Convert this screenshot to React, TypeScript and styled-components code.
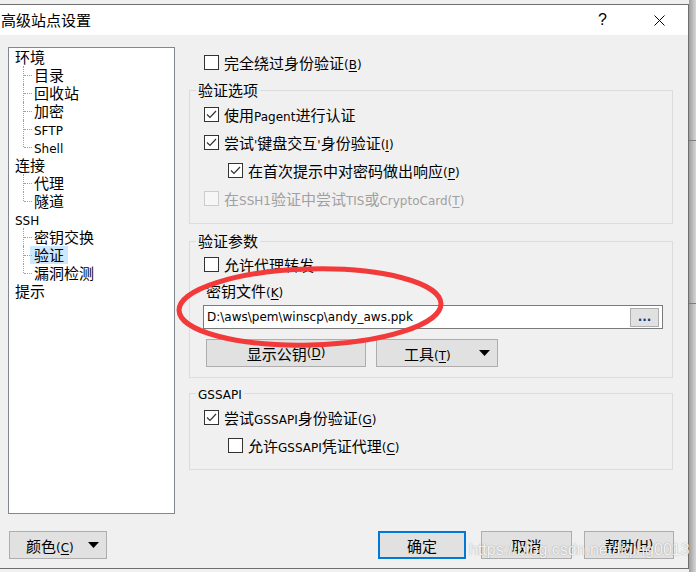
import React from "react";
import styled, { createGlobalStyle, css } from "styled-components";

const Global = createGlobalStyle`
  html, body { margin: 0; padding: 0; }
  body {
    width: 696px; height: 572px; overflow: hidden;
    background: #f2f2f2;
    font-family: "Noto Sans CJK SC", "Microsoft YaHei", sans-serif;
    font-size: 15px; color: #000;
  }
`;

const Screen = styled.div`
  position: relative;
  width: 696px;
  height: 572px;
  box-sizing: border-box;
  padding-top: 4px;
  display: flex;
  align-items: flex-start;
  background: #f0f0f0;
`;

const EdgeStrip = styled.div`
  flex: 1;
  align-self: stretch;
  margin-top: -4px;
  background:
    linear-gradient(to bottom, transparent 0, transparent 140px, #7d7d7d 140px, #7d7d7d 141px, transparent 141px,
      transparent 303px, #7d7d7d 303px, #7d7d7d 304px, transparent 304px),
    linear-gradient(to right, #9e9e9e, #d6d6d6);
`;

const Window = styled.div`
  width: 689px;
  height: 565px;
  box-sizing: border-box;
  border: 1px solid #6f6f6f;
  border-left: none;
  background: #f0f0f0;
  display: flex;
  flex-direction: column;
`;

const TitleBar = styled.div`
  height: 30px;
  flex: none;
  background: #fff;
  display: flex;
  align-items: center;
`;

const Title = styled.div`
  flex: 1;
  padding-left: 1px;
  font-size: 15px;
  line-height: 30px;
`;

const Caption = styled.div`
  width: 57px;
  height: 30px;
  display: flex;
  align-items: center;
  justify-content: center;
  font-size: 16px;
  font-family: "Liberation Sans", "Noto Sans CJK SC", sans-serif;
`;

const Body = styled.div`
  flex: 1;
  display: flex;
  flex-direction: column;
  padding: 12px 14px 8px 8px;
`;

const Main = styled.div`
  display: flex;
  gap: 14px;
  height: 467px;
`;

const Tree = styled.div`
  width: 167px;
  flex: none;
  box-sizing: border-box;
  background: #fff;
  border: 1px solid #828790;
`;

const TreeRow = styled.div<{ $child?: boolean; $last?: boolean }>`
  position: relative;
  height: 18px;
  line-height: 18px;
  padding-left: ${(p) => (p.$child ? 21 : 2)}px;
  white-space: nowrap;
  ${(p) =>
    p.$child &&
    css`
      &::before {
        content: "";
        position: absolute;
        left: 14px;
        top: 0;
        height: ${p.$last ? 9 : 18}px;
        border-left: 1px dotted #a0a0a0;
      }
      &::after {
        content: "";
        position: absolute;
        left: 15px;
        top: 9px;
        width: 8px;
        border-top: 1px dotted #a0a0a0;
      }
    `}
`;

const TreeLabel = styled.span<{ $selected?: boolean }>`
  display: inline-block;
  padding: 0 4px;
  height: 18px;
  background: ${(p) => (p.$selected ? "#cce8ff" : "transparent")};
`;

const Panel = styled.div`
  width: 484px;
  flex: none;
  display: flex;
  flex-direction: column;
  padding-top: 1px;
`;

const CheckRow = styled.label<{ $indent?: number; $disabled?: boolean }>`
  height: 28px;
  display: flex;
  align-items: center;
  gap: 5px;
  padding-left: ${(p) => p.$indent ?? 0}px;
  color: ${(p) => (p.$disabled ? "#a0a0a0" : "#000")};
  white-space: nowrap;
`;

const Box = styled.span<{ $disabled?: boolean }>`
  width: 15px;
  height: 15px;
  box-sizing: border-box;
  flex: none;
  border: 1px solid ${(p) => (p.$disabled ? "#cccccc" : "#333")};
  background: ${(p) => (p.$disabled ? "#f6f6f6" : "#fff")};
  display: flex;
  align-items: center;
  justify-content: center;
`;

const Group = styled.fieldset<{ $mt: number }>`
  margin: ${(p) => p.$mt}px 0 0 0;
  padding: 0;
  border: 1px solid #dcdcdc;
  min-width: 0;
`;

const GroupTitle = styled.legend`
  margin-left: 6px;
  padding: 0 2px;
  height: 18px;
  line-height: 18px;
  font-size: 15px;
`;

const GroupBody = styled.div<{ $pt: number; $pb: number }>`
  display: flex;
  flex-direction: column;
  padding: ${(p) => p.$pt}px 0 ${(p) => p.$pb}px 14px;
`;

const FieldLabel = styled.div`
  margin-top: 4px;
  height: 18px;
  line-height: 18px;
  padding-left: 2px;
`;

const PathInput = styled.div`
  margin-top: 5px;
  margin-left: -1px;
  width: 460px;
  height: 24px;
  box-sizing: border-box;
  border: 1px solid #7a7a7a;
  background: #fff;
  display: flex;
  align-items: center;
  padding: 0 3px 0 3px;
`;

const PathText = styled.span`
  flex: 1;
  white-space: nowrap;
  overflow: hidden;
  font-family: "DejaVu Sans", sans-serif;
  font-size: 12px;
`;

const Browse = styled.span`
  width: 29px;
  height: 19px;
  box-sizing: border-box;
  background: #e1e1e1;
  border: 1px solid #adadad;
  display: flex;
  align-items: flex-end;
  justify-content: center;
  font-family: "DejaVu Sans", sans-serif;
  font-size: 12px;
  font-weight: bold;
  line-height: 1;
  padding-bottom: 3px;
  color: #1a3a7a;
`;

const ButtonRow = styled.div`
  margin-top: 10px;
  display: flex;
  gap: 10px;
  padding-left: 2px;
`;

const Button = styled.div<{ $w: number; $default?: boolean; $split?: boolean; $pl?: number }>`
  width: ${(p) => p.$w}px;
  height: 28px;
  box-sizing: border-box;
  background: #e1e1e1;
  border: ${(p) => (p.$default ? "2px solid #0078d7" : "1px solid #adadad")};
  display: flex;
  align-items: center;
  justify-content: ${(p) => (p.$split ? "flex-start" : "center")};
  padding-left: ${(p) => (p.$split ? p.$pl ?? 0 : 0)}px;
  padding-right: ${(p) => (p.$split ? 7 : 0)}px;
  white-space: nowrap;
  flex: none;
`;

const Arrow = styled.svg`
  margin-left: auto;
  flex: none;
`;

const Footer = styled.div`
  margin-top: 17px;
  height: 28px;
  display: flex;
  padding-left: 1px;
`;

const FooterRight = styled.div`
  margin-left: auto;
  display: flex;
`;

const Spacer = styled.span<{ $w: number }>`
  width: ${(p) => p.$w}px;
  flex: none;
`;

const Lat = styled.span`
  font-family: "DejaVu Sans", sans-serif;
  font-size: 12px;
  line-height: 1;
`;

const Mn = styled.span`
  text-decoration: underline;
  text-underline-offset: 2px;
`;

const Watermark = styled.div`
  position: absolute;
  left: 469px;
  top: 541px;
  font-family: "Liberation Sans", sans-serif;
  font-size: 16px;
  color: rgba(255, 255, 255, 0.9);
  text-shadow: 0 0 1px rgba(0, 0, 0, 0.3), 0 0 2px rgba(0, 0, 0, 0.12);
  white-space: nowrap;
  pointer-events: none;
`;

const Overlay = styled.svg`
  position: absolute;
  left: 0;
  top: 0;
  pointer-events: none;
`;

function withMn(p: string): React.ReactNode {
  const idx = p.indexOf("&");
  if (idx < 0) return p;
  return (
    <>
      {p.slice(0, idx)}
      <Mn>{p[idx + 1]}</Mn>
      {p.slice(idx + 2)}
    </>
  );
}

const T: React.FC<{ s: string }> = ({ s }) => {
  const parts = s.match(/[\x00-\x7F]+|[^\x00-\x7F]+/g) || [];
  return (
    <>
      {parts.map((p, i) =>
        /^[\x00-\x7F]/.test(p) ? <Lat key={i}>{withMn(p)}</Lat> : <React.Fragment key={i}>{p}</React.Fragment>
      )}
    </>
  );
};

const CheckMark = () => (
  <svg width="11" height="9" viewBox="0 0 11 9">
    <path d="M1 4.5 L4 7.5 L10 1" fill="none" stroke="#333" strokeWidth="1.2" />
  </svg>
);

const Check: React.FC<{ checked?: boolean; disabled?: boolean; indent?: number; s: string }> = ({
  checked,
  disabled,
  indent,
  s,
}) => (
  <CheckRow $indent={indent} $disabled={disabled}>
    <Box $disabled={disabled}>{checked && <CheckMark />}</Box>
    <span>
      <T s={s} />
    </span>
  </CheckRow>
);

const DownArrow = () => (
  <Arrow width="11" height="6" viewBox="0 0 11 6">
    <path d="M0 0 H11 L5.5 6 Z" fill="#000" />
  </Arrow>
);

const tree: { label: string; children: string[] }[] = [
  { label: "环境", children: ["目录", "回收站", "加密", "SFTP", "Shell"] },
  { label: "连接", children: ["代理", "隧道"] },
  { label: "SSH", children: ["密钥交换", "验证", "漏洞检测"] },
  { label: "提示", children: [] },
];

export default function App() {
  return (
    <>
      <Global />
      <Screen>
        <Window>
          <TitleBar>
            <Title>高级站点设置</Title>
            <Caption>?</Caption>
            <Caption>
              <svg width="11" height="11" viewBox="0 0 11 11">
                <path d="M0.5 0.5 L10.5 10.5 M10.5 0.5 L0.5 10.5" stroke="#000" strokeWidth="1" />
              </svg>
            </Caption>
          </TitleBar>
          <Body>
            <Main>
              <Tree>
                {tree.map((n) => (
                  <React.Fragment key={n.label}>
                    <TreeRow>
                      <TreeLabel>
                        <T s={n.label} />
                      </TreeLabel>
                    </TreeRow>
                    {n.children.map((c, i) => (
                      <TreeRow key={c} $child $last={i === n.children.length - 1}>
                        <TreeLabel $selected={c === "验证"}>
                          <T s={c} />
                        </TreeLabel>
                      </TreeRow>
                    ))}
                  </React.Fragment>
                ))}
              </Tree>
              <Panel>
                <Check indent={15} s="完全绕过身份验证(&B)" />
                <Group $mt={5}>
                  <GroupTitle>验证选项</GroupTitle>
                  <GroupBody $pt={1} $pb={11}>
                    <Check checked s="使用Pagent进行认证" />
                    <Check checked s="尝试'键盘交互'身份验证(&I)" />
                    <Check checked indent={24} s="在首次提示中对密码做出响应(&P)" />
                    <Check disabled s="在SSH1验证中尝试TIS或CryptoCard(&T)" />
                  </GroupBody>
                </Group>
                <Group $mt={8}>
                  <GroupTitle>验证参数</GroupTitle>
                  <GroupBody $pt={0} $pb={10}>
                    <Check s="允许代理转发" />
                    <FieldLabel>
                      <T s="密钥文件(&K)" />
                    </FieldLabel>
                    <PathInput>
                      <PathText>D:\aws\pem\winscp\andy_aws.ppk</PathText>
                      <Browse>...</Browse>
                    </PathInput>
                    <ButtonRow>
                      <Button $w={160}>
                        <T s="显示公钥(&D)" />
                      </Button>
                      <Button $w={122} $split $pl={27}>
                        <span>
                          <T s="工具(&T)" />
                        </span>
                        <DownArrow />
                      </Button>
                    </ButtonRow>
                  </GroupBody>
                </Group>
                <Group $mt={6}>
                  <GroupTitle>
                    <Lat>GSSAPI</Lat>
                  </GroupTitle>
                  <GroupBody $pt={1} $pb={10}>
                    <Check checked s="尝试GSSAPI身份验证(&G)" />
                    <Check indent={24} s="允许GSSAPI凭证代理(&C)" />
                  </GroupBody>
                </Group>
              </Panel>
            </Main>
            <Footer>
              <Button $w={98} $split $pl={16}>
                <span>
                  <T s="颜色(&C)" />
                </span>
                <DownArrow />
              </Button>
              <FooterRight>
                <Button $w={88} $default>
                  确定
                </Button>
                <Spacer $w={15} />
                <Button $w={91}>取消</Button>
                <Spacer $w={12} />
                <Button $w={90}>
                  <T s="帮助(&H)" />
                </Button>
              </FooterRight>
            </Footer>
          </Body>
        </Window>
        <EdgeStrip />
        <Overlay width="696" height="572" viewBox="0 0 696 572">
          <ellipse
            cx="310"
            cy="307"
            rx="131"
            ry="38"
            fill="none"
            stroke="#f23a3a"
            strokeWidth="5"
            transform="rotate(-1.5 310 307)"
          />
        </Overlay>
        <Watermark>https://blog.csdn.net/liqing0013</Watermark>
      </Screen>
    </>
  );
}
